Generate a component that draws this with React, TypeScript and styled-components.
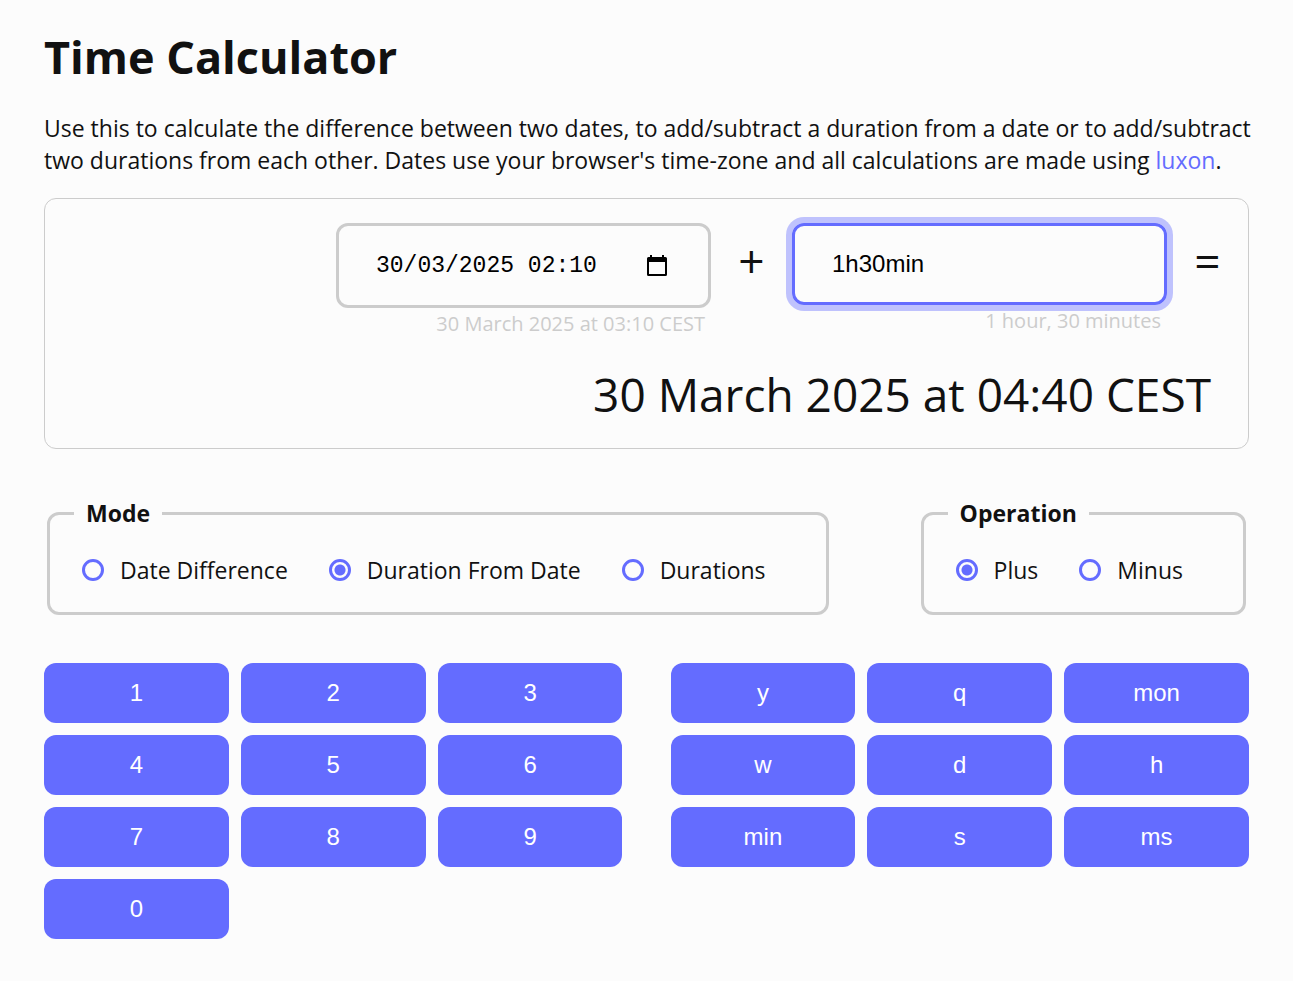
import React, { useState } from "react";
import styled, { createGlobalStyle, css } from "styled-components";

const accent = "#646cff";
const line = "#cccccc";
const ink = "#111111";
const paper = "#fcfcfc";
const sans = `"Segoe UI", "Open Sans", sans-serif`;
const control = `"Liberation Sans", Arial, sans-serif`;
const mono = `"Liberation Mono", monospace`;

const GlobalStyle = createGlobalStyle`
  *, *::before, *::after { box-sizing: border-box; }
  body {
    margin: 0;
    background: ${paper};
    color: ${ink};
    font-family: ${sans};
    font-size: 23px;
    line-height: 32px;
  }
`;

const Page = styled.main`
  padding: 24px 44px 42px;
`;

const Title = styled.h1`
  margin: 0 0 22px;
  font-size: 45px;
  line-height: 66px;
  font-weight: 700;
`;

const Intro = styled.p`
  margin: 0 -12px 22px 0;
`;

const Link = styled.a`
  color: ${accent};
  text-decoration: none;
`;

const Display = styled.section`
  border: 1px solid ${line};
  border-radius: 12px;
  padding: 24px 0 22px;
  margin-bottom: 48px;
`;

const Expression = styled.div`
  display: flex;
  justify-content: flex-end;
  align-items: flex-start;
  height: 139px;
`;

const Operand = styled.div`
  display: flex;
  flex-direction: column;
  flex: 0 1 375px;
  min-width: 0;
`;

const Field = styled.div<{ $active?: boolean; $tall?: boolean }>`
  display: flex;
  align-items: center;
  height: ${(p) => (p.$tall ? 85 : 82)}px;
  padding: 0 37px;
  border: 3px solid ${(p) => (p.$active ? accent : line)};
  border-radius: 12px;
  ${(p) =>
    p.$active &&
    css`
      box-shadow: 0 0 0 6px rgba(100, 108, 255, 0.4);
    `}
`;

const FieldInput = styled.input<{ $mono?: boolean }>`
  flex: 1;
  min-width: 0;
  padding: 0;
  border: 0;
  outline: 0;
  background: transparent;
  color: #000;
  font-family: ${(p) => (p.$mono ? mono : control)};
  font-size: ${(p) => (p.$mono ? 23 : 24)}px;
  line-height: 28px;
`;

const PickerButton = styled.button`
  display: flex;
  padding: 0 4px;
  border: 0;
  background: none;
  color: #000;
  cursor: pointer;
`;

const Hint = styled.output`
  padding-right: 6px;
  color: ${line};
  font-size: 20px;
  text-align: right;
`;

const Operator = styled.span`
  flex: 0 0 81px;
  text-align: center;
  font-size: 46px;
  line-height: 74px;
`;

const Result = styled.output`
  display: block;
  padding-right: 37px;
  font-size: 46px;
  line-height: 64px;
  text-align: right;
`;

const Choices = styled.div`
  display: flex;
  justify-content: space-between;
  margin: 0 3px 48px;
`;

const Group = styled.fieldset`
  display: flex;
  gap: 41px;
  margin: 0;
  padding: 25px 60px 26px 32px;
  border: 3px solid ${line};
  border-radius: 12px;
`;

const Legend = styled.legend`
  margin-left: -8px;
  padding: 0 12px;
  font-weight: 700;
`;

const Option = styled.label`
  display: flex;
  align-items: center;
  gap: 16px;
  white-space: nowrap;
  cursor: pointer;
`;

const Radio = styled.input`
  appearance: none;
  width: 22px;
  height: 22px;
  margin: 0;
  border: 3px solid ${accent};
  border-radius: 50%;
  cursor: pointer;

  &:checked {
    background: radial-gradient(circle, ${accent} 5px, transparent 6px);
  }
`;

const Keypads = styled.div`
  display: grid;
  grid-template-columns: 1fr 1fr;
  gap: 48px;
  align-items: start;
`;

const Keypad = styled.div`
  display: grid;
  grid-template-columns: repeat(3, 1fr);
  gap: 12px;
`;

const Key = styled.button`
  height: 60px;
  padding: 0;
  border: 0;
  border-radius: 12px;
  background: ${accent};
  color: #fff;
  font-family: ${control};
  font-size: 24px;
  cursor: pointer;
`;

const CalendarIcon = () => (
  <svg width="20" height="21" viewBox="0 0 20 21" fill="none" aria-hidden="true">
    <path d="M3 0h2v2h10V0h2v2h1.500a1.500 1.500 0 0 1 1.500 1.500v16a1.500 1.500 0 0 1-1.500 1.500h-17A1.500 1.500 0 0 1 0 19.500v-16A1.500 1.500 0 0 1 1.500 2H3zM2 7v12h16V7z" fill="currentColor" fillRule="evenodd" />
  </svg>
);

const modes = ["Date Difference", "Duration From Date", "Durations"];
const operations = ["Plus", "Minus"];
const digits = ["1", "2", "3", "4", "5", "6", "7", "8", "9", "0"];
const units = ["y", "q", "mon", "w", "d", "h", "min", "s", "ms"];

type RadioGroupProps = {
  legend: string;
  name: string;
  options: string[];
  value: string;
  onChange: (value: string) => void;
};

const RadioGroup = ({ legend, name, options, value, onChange }: RadioGroupProps) => (
  <Group>
    <Legend>{legend}</Legend>
    {options.map((option) => (
      <Option key={option}>
        <Radio type="radio" name={name} checked={option === value} onChange={() => onChange(option)} />
        {option}
      </Option>
    ))}
  </Group>
);

export default function App() {
  const [date, setDate] = useState("30/03/2025 02:10");
  const [duration, setDuration] = useState("1h30min");
  const [mode, setMode] = useState("Duration From Date");
  const [operation, setOperation] = useState("Plus");
  const append = (key: string) => setDuration((current) => current + key);

  return (
    <>
      <GlobalStyle />
      <Page>
        <Title>Time Calculator</Title>
        <Intro>
          Use this to calculate the difference between two dates, to add/subtract a duration from a date or to
          add/subtract two durations from each other. Dates use your browser's time-zone and all calculations are made
          using <Link href="https://moment.github.io/luxon/">luxon</Link>.
        </Intro>

        <Display>
          <Expression>
            <Operand>
              <Field $tall>
                <FieldInput $mono aria-label="Date" value={date} onChange={(e) => setDate(e.target.value)} />
                <PickerButton type="button" aria-label="Show date picker">
                  <CalendarIcon />
                </PickerButton>
              </Field>
              <Hint>30 March 2025 at 03:10 CEST</Hint>
            </Operand>
            <Operator>{operation === "Plus" ? "+" : "−"}</Operator>
            <Operand>
              <Field $active>
                <FieldInput aria-label="Duration" value={duration} onChange={(e) => setDuration(e.target.value)} />
              </Field>
              <Hint>1 hour, 30 minutes</Hint>
            </Operand>
            <Operator>=</Operator>
          </Expression>
          <Result>30 March 2025 at 04:40 CEST</Result>
        </Display>

        <Choices>
          <RadioGroup legend="Mode" name="mode" options={modes} value={mode} onChange={setMode} />
          <RadioGroup
            legend="Operation"
            name="operation"
            options={operations}
            value={operation}
            onChange={setOperation}
          />
        </Choices>

        <Keypads>
          <Keypad>
            {digits.map((key) => (
              <Key key={key} type="button" onClick={() => append(key)}>
                {key}
              </Key>
            ))}
          </Keypad>
          <Keypad>
            {units.map((key) => (
              <Key key={key} type="button" onClick={() => append(key)}>
                {key}
              </Key>
            ))}
          </Keypad>
        </Keypads>
      </Page>
    </>
  );
}
